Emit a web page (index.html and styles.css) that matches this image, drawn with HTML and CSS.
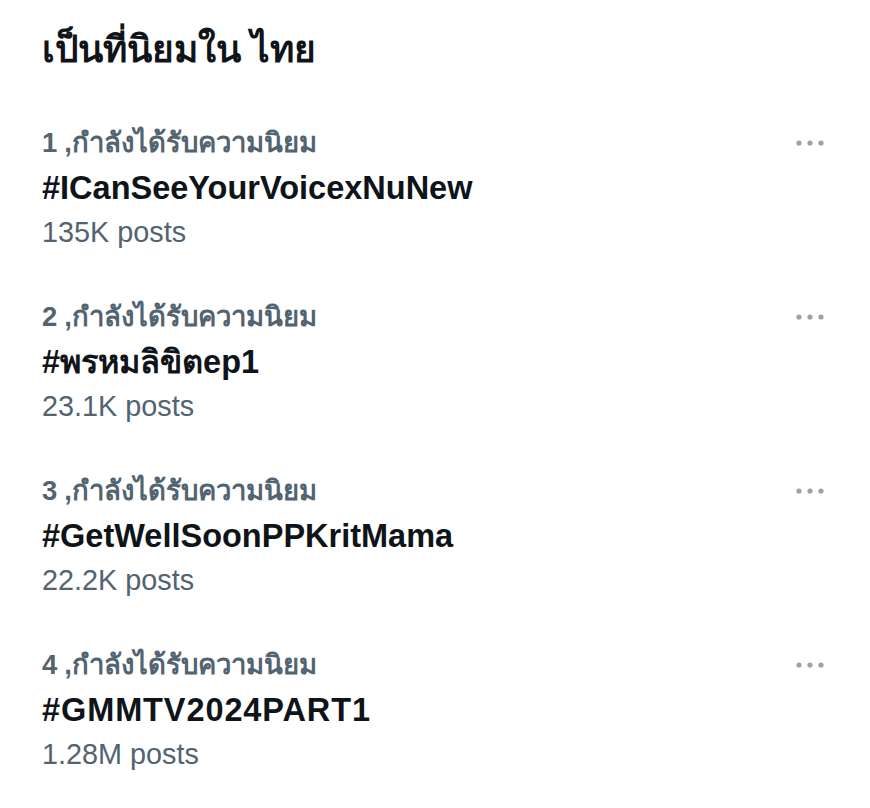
FILE: index.html
```html
<!DOCTYPE html>
<html lang="th">
<head>
	<meta charset="UTF-8">
	<title>เป็นที่นิยมใน ไทย</title>
	<link rel="stylesheet" href="styles.css">
</head>
<body>
<main class="trends">
	<h1 class="trends-title">เป็นที่นิยมใน ไทย</h1>

	<div class="trend">
		<div class="trend-text">
			<div class="trend-meta"><span class="num">1</span>,กำลังได้รับความนิยม</div>
			<div class="trend-tag">#ICanSeeYourVoicexNuNew</div>
			<div class="trend-count">135K posts</div>
		</div>
		<svg class="more" width="30" height="10" viewBox="0 0 30 10"><circle cx="4" cy="5" r="2.6"/><circle cx="15" cy="5" r="2.6"/><circle cx="26" cy="5" r="2.6"/></svg>
	</div>

	<div class="trend">
		<div class="trend-text">
			<div class="trend-meta"><span class="num">2</span>,กำลังได้รับความนิยม</div>
			<div class="trend-tag">#พรหมลิขิตep1</div>
			<div class="trend-count">23.1K posts</div>
		</div>
		<svg class="more" width="30" height="10" viewBox="0 0 30 10"><circle cx="4" cy="5" r="2.6"/><circle cx="15" cy="5" r="2.6"/><circle cx="26" cy="5" r="2.6"/></svg>
	</div>

	<div class="trend">
		<div class="trend-text">
			<div class="trend-meta"><span class="num">3</span>,กำลังได้รับความนิยม</div>
			<div class="trend-tag">#GetWellSoonPPKritMama</div>
			<div class="trend-count">22.2K posts</div>
		</div>
		<svg class="more" width="30" height="10" viewBox="0 0 30 10"><circle cx="4" cy="5" r="2.6"/><circle cx="15" cy="5" r="2.6"/><circle cx="26" cy="5" r="2.6"/></svg>
	</div>

	<div class="trend">
		<div class="trend-text">
			<div class="trend-meta"><span class="num">4</span>,กำลังได้รับความนิยม</div>
			<div class="trend-tag tag-caps">#GMMTV2024PART1</div>
			<div class="trend-count">1.28M posts</div>
		</div>
		<svg class="more" width="30" height="10" viewBox="0 0 30 10"><circle cx="4" cy="5" r="2.6"/><circle cx="15" cy="5" r="2.6"/><circle cx="26" cy="5" r="2.6"/></svg>
	</div>
</main>
</body>
</html>
```

FILE: styles.css
```css
body {
	margin: 0;
	background: #ffffff;
	font-family: "Liberation Sans", "Noto Sans", sans-serif;
	color: #0f1419;
}

.trends {
	padding: 26px 45px 0 42px;
}

.trends-title {
	margin: 0 0 47px 0;
	font-size: 37px;
	font-weight: bold;
	line-height: 48px;
}

.trend {
	display: flex;
	justify-content: space-between;
	align-items: flex-start;
	margin-bottom: 42px;
}

.trend-meta {
	color: #536471;
	font-size: 27.5px;
	font-weight: 600;
	line-height: 44px;
}

.num {
	margin-right: 7px;
	font-weight: bold;
}

.trend-tag {
	font-size: 32.5px;
	font-weight: bold;
	line-height: 46px;
}

/* all-caps tag runs a bit wider in the original font */
.tag-caps {
	letter-spacing: 0.9px;
}

.trend-count {
	color: #536471;
	font-size: 28.8px;
	line-height: 42px;
}

.more {
	fill: #98a2ab;
	margin-top: 17px;
}
```
